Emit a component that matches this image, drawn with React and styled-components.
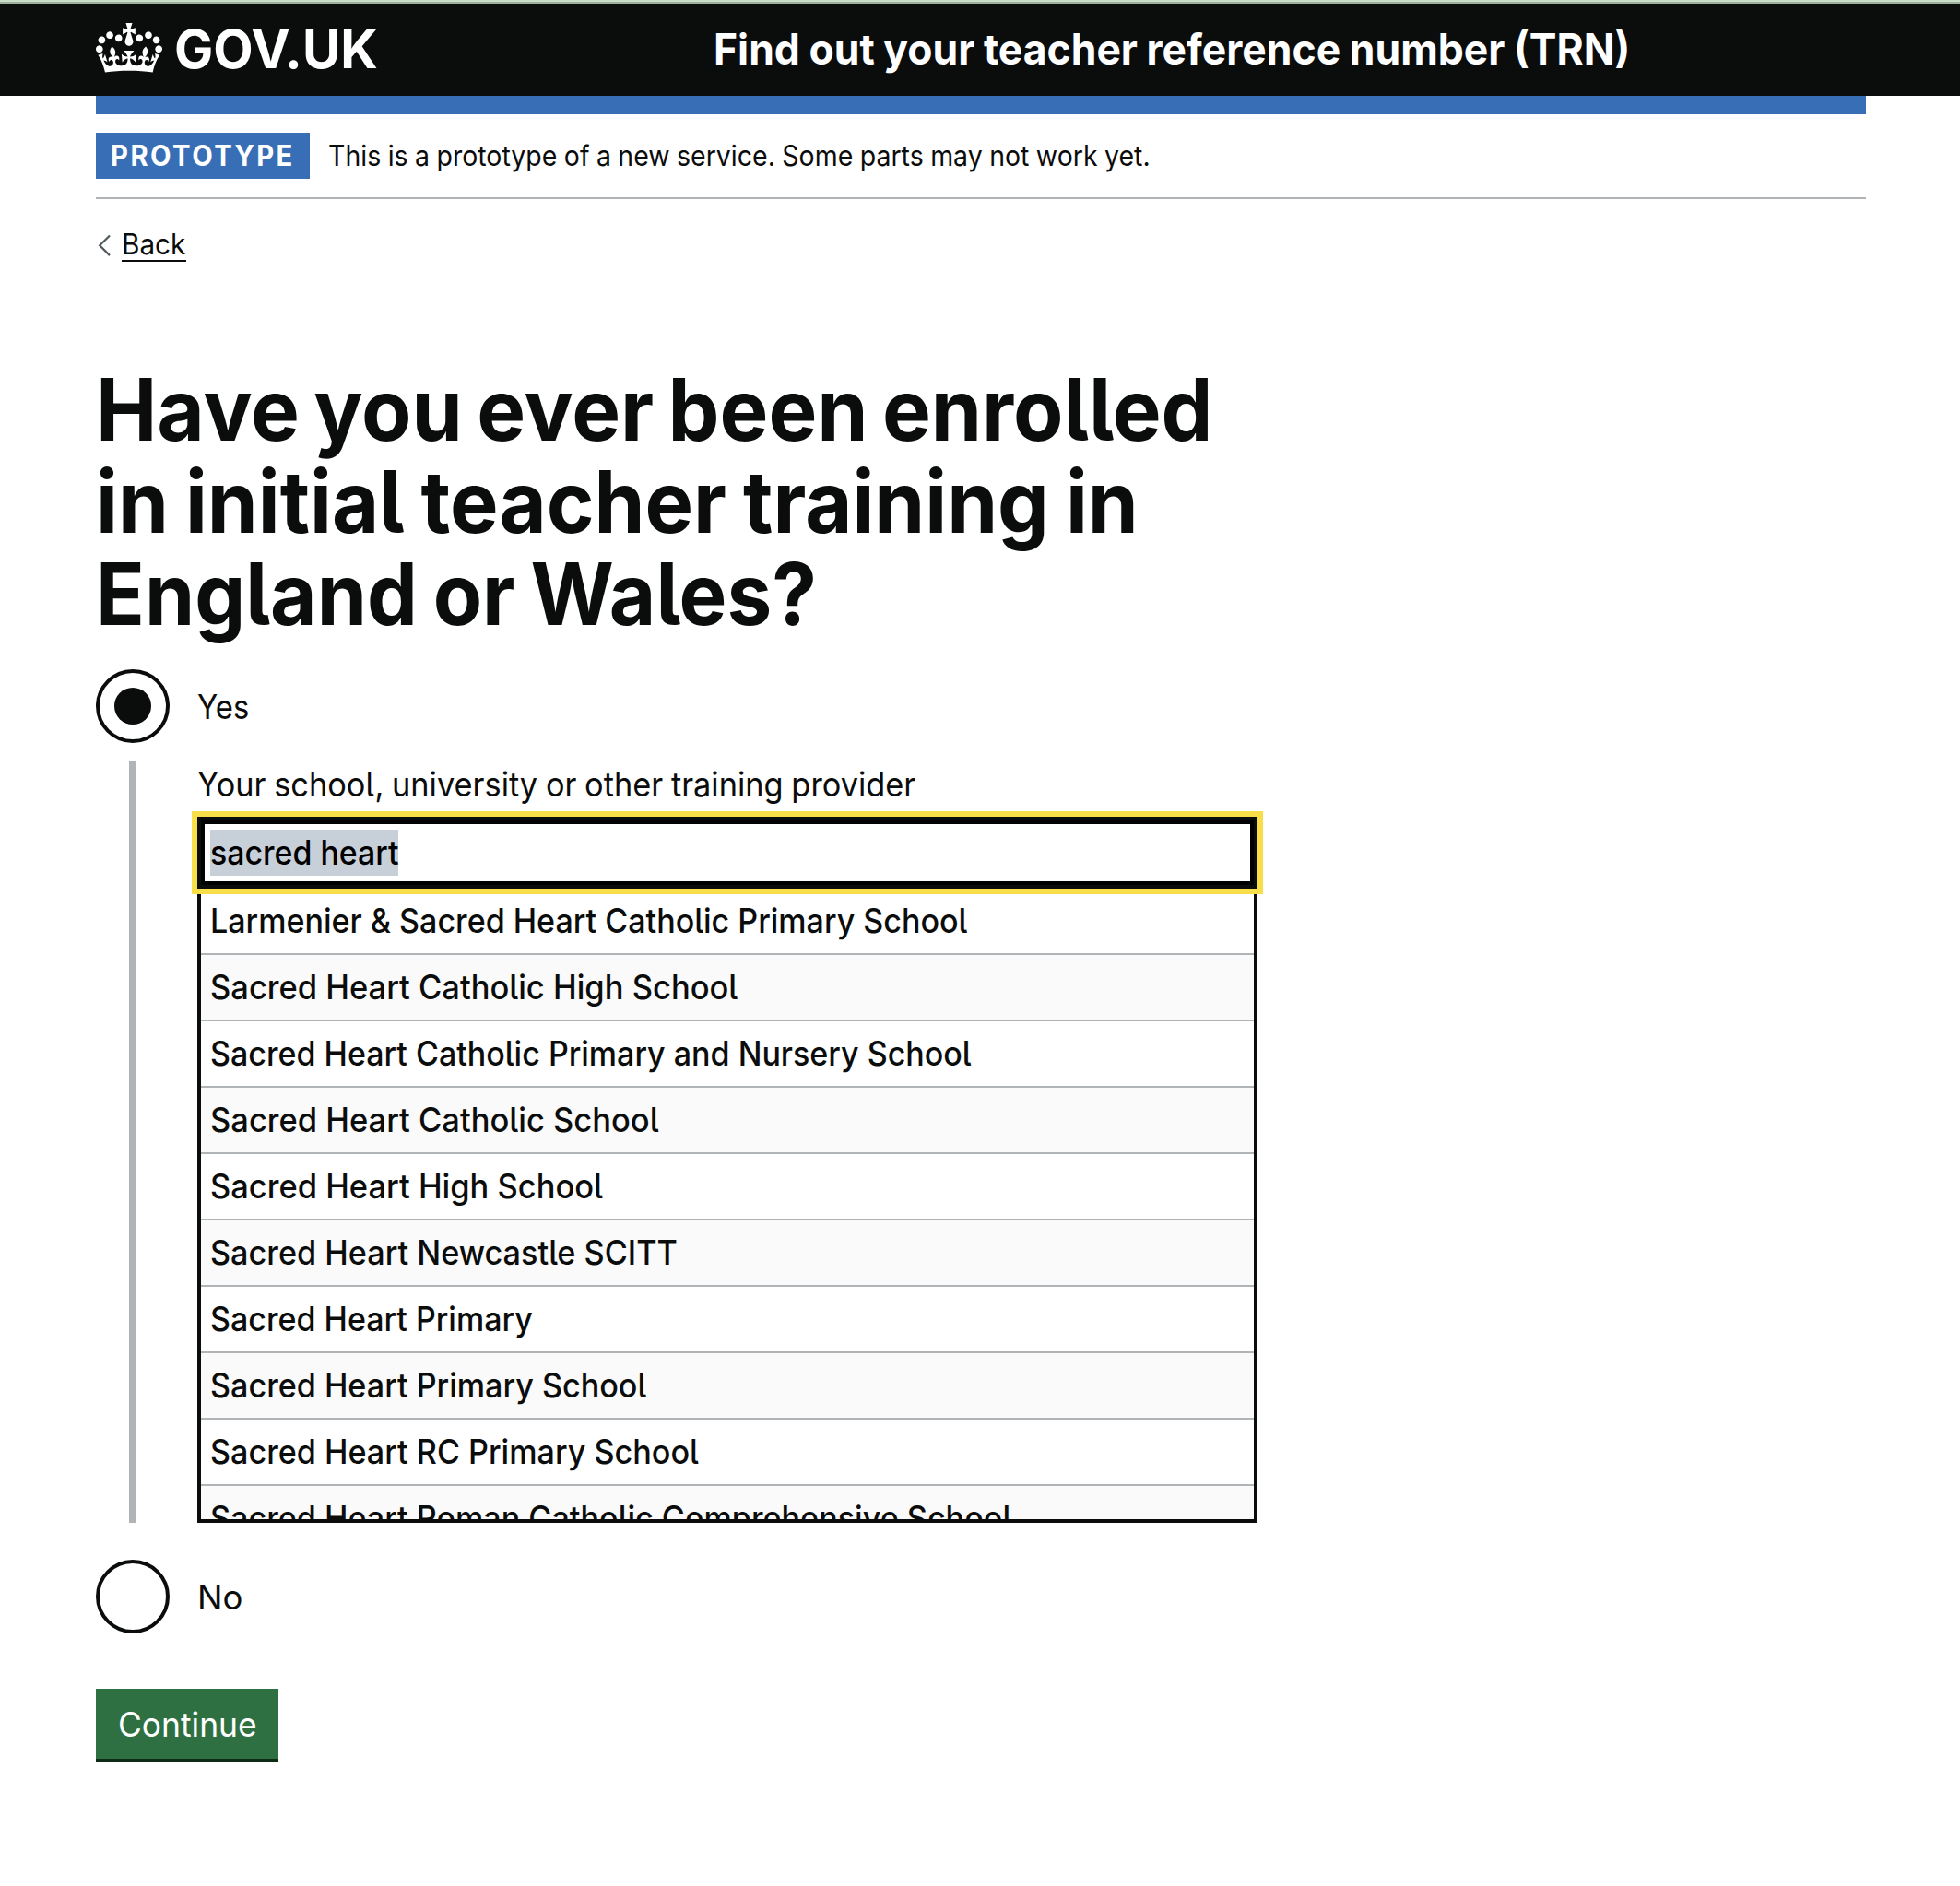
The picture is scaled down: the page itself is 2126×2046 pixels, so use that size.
import React from "react";
import styled, { createGlobalStyle } from "styled-components";

const ink = "#0b0c0c";
const blue = "#386eb5";
const grey = "#b1b4b6";

const GlobalStyle = createGlobalStyle`
  *, *::before, *::after { box-sizing: border-box; }
  body {
    margin: 0;
    background: #fff;
    color: ${ink};
    font-family: Inter, "Liberation Sans", sans-serif;
    font-feature-settings: "cv05";
    -webkit-font-smoothing: antialiased;
  }
`;

/* Slightly condenses a run of text, keeping its left edge in place. */
const Run = styled.span`
  display: ${(p) => (p.$block ? "block" : "inline-block")};
  width: max-content;
  white-space: nowrap;
  word-spacing: ${(p) => p.$gap || 0}px;
  transform: scaleX(${(p) => p.$fit || 0.935});
  transform-origin: left center;
`;

const TopStrip = styled.div`
  height: 4px;
  background: #c8dec8;
  border-bottom: 2px solid #9dae9d;
`;

const Header = styled.header`
  height: 100px;
  background: ${ink};
  color: #fff;
  padding: 0 102px 0 104px;
  display: flex;
`;

const HomeLink = styled.a`
  display: flex;
  width: 670px;
  color: #fff;
  text-decoration: none;
`;

const Crown = styled.svg`
  width: 72px;
  height: 54px;
  margin-top: 21px;
  fill: currentColor;
`;

const LogoText = styled.span`
  margin: 14px 0 0 13px;
  font-size: 58px;
  font-weight: 700;
  line-height: 70px;
`;

const ServiceName = styled.span`
  margin-top: 24px;
  font-size: 46.2px;
  font-weight: 700;
  line-height: 50px;
`;

const Container = styled.div`
  width: 1920px;
  margin-left: 104px;
`;

const BlueBar = styled.div`
  height: 20px;
  background: ${blue};
`;

const PhaseBanner = styled.div`
  display: flex;
  align-items: center;
  height: 92px;
  gap: 20px;
  border-bottom: 2px solid ${grey};
  font-size: 31px;
  line-height: 40px;
`;

const Tag = styled.strong`
  width: 232px;
  height: 50px;
  padding: 5px 16px;
  background: ${blue};
  color: #fff;
  letter-spacing: 2.6px;
`;

const BackLink = styled.a`
  display: flex;
  width: max-content;
  margin-top: 28px;
  height: 42px;
  font-size: 31px;
  line-height: 40px;
  color: ${ink};
  text-decoration: none;
`;

const Chevron = styled.svg`
  width: 28px;
  height: 42px;
  fill: none;
  stroke: #505a5f;
  stroke-width: 2.2;
`;

const BackText = styled.span`
  width: 70px;
  height: 40px;
  padding-top: 1px;
  border-bottom: 2px solid ${ink};
`;

const Main = styled.main`
  width: 1260px;
  padding-top: 108px;
`;

const Heading = styled.h1`
  margin: 0 0 32px;
  font-size: 93px;
  font-weight: 700;
  line-height: 100px;
`;

const Radio = styled.label`
  display: flex;
  gap: 30px;
  height: 80px;
  font-size: 36.7px;
  line-height: 50px;
`;

const Dial = styled.span`
  display: flex;
  align-items: center;
  justify-content: center;
  width: 80px;
  height: 80px;
  border: 4px solid ${ink};
  border-radius: 50%;
`;

const Dot = styled.span`
  width: 40px;
  height: 40px;
  border-radius: 50%;
  background: ${ink};
`;

const RadioText = styled.span`
  padding-top: 16px;
`;

const Conditional = styled.div`
  margin: 20px 0 40px 36px;
  padding-left: 66px;
  border-left: 8px solid ${grey};
  font-size: 36.7px;
  line-height: 50px;
`;

const FieldLabel = styled.div`
  height: 60px;
`;

const Field = styled.div`
  position: relative;
  width: 1150px;
  height: 78px;
  padding: 10px;
  border: 4px solid ${ink};
  box-shadow: inset 0 0 0 4px #000;
  outline: 6px solid #f8de49;
  background: #fff;
  color: #000;
  font-weight: 500;
`;

const Selection = styled.span`
  display: block;
  width: 204px;
  height: 50px;
  background: #c7cfd9;
`;

const Menu = styled.ul`
  list-style: none;
  margin: 0;
  padding: 0;
  width: 1150px;
  height: 688px;
  overflow: hidden;
  border: 4px solid ${ink};
  border-top: 0;
  font-weight: 500;
`;

const Option = styled.li`
  height: 72px;
  padding: 10px;
  border-bottom: 2px solid ${grey};

  &:nth-child(even) { background: #fafafa; }
`;

const Continue = styled.button`
  display: block;
  width: 198px;
  height: 80px;
  margin: 60px 0 0;
  padding: 14px 24px 12px;
  border: 0;
  border-bottom: 4px solid #0e2b18;
  background: #2f7042;
  color: #fff;
  font: 400 36.7px/50px Inter, "Liberation Sans", sans-serif;
  font-feature-settings: inherit;
  text-align: left;
`;

const headingLines = [
  ["Have you ever been enrolled", 0.955, -6],
  ["in initial teacher training in", 0.949, -3],
  ["England or Wales?", 0.9366, -4],
];

const schools = [
  ["Larmenier & Sacred Heart Catholic Primary School", 0.9283],
  ["Sacred Heart Catholic High School", 0.9404],
  ["Sacred Heart Catholic Primary and Nursery School", 0.9275],
  ["Sacred Heart Catholic School", 0.9405],
  ["Sacred Heart High School", 0.9398],
  ["Sacred Heart Newcastle SCITT", 0.933],
  ["Sacred Heart Primary", 0.9275],
  ["Sacred Heart Primary School", 0.9305],
  ["Sacred Heart RC Primary School", 0.931],
  ["Sacred Heart Roman Catholic Comprehensive School", 0.9308],
];

const crownPath =
  "M25 30.2c3.5 1.5 7.7-.2 9.1-3.7 1.5-3.6-.2-7.8-3.9-9.2-3.6-1.4-7.6.3-9.1 3.9-1.4 3.5.3 7.5 3.9 9zM9 39.5c3.6 1.5 7.8-.2 9.2-3.7 1.5-3.6-.2-7.8-3.9-9.1-3.6-1.5-7.6.2-9.1 3.8-1.4 3.5.3 7.5 3.8 9zM4.4 57.2c3.5 1.5 7.7-.2 9.1-3.8 1.5-3.6-.2-7.7-3.9-9.1-3.5-1.5-7.6.3-9.1 3.8-1.4 3.5.3 7.6 3.9 9.1zm38.3-21.4c3.5 1.5 7.7-.2 9.1-3.8 1.5-3.6-.2-7.7-3.9-9.1-3.6-1.5-7.6.3-9.1 3.8-1.3 3.6.4 7.7 3.9 9.1zm64.4-5.6c-3.6 1.5-7.8-.2-9.1-3.7-1.5-3.6.2-7.8 3.8-9.2 3.6-1.4 7.7.3 9.2 3.9 1.3 3.5-.4 7.5-3.9 9zm15.9 9.3c-3.6 1.5-7.7-.2-9.1-3.7-1.5-3.6.2-7.8 3.7-9.1 3.6-1.5 7.7.2 9.2 3.8 1.5 3.5-.3 7.5-3.8 9zm4.7 17.7c-3.6 1.5-7.8-.2-9.2-3.8-1.5-3.6.2-7.7 3.9-9.1 3.6-1.5 7.7.3 9.2 3.8 1.3 3.5-.4 7.6-3.9 9.1zM89.3 35.8c-3.6 1.5-7.8-.2-9.2-3.8-1.4-3.6.2-7.7 3.9-9.1 3.6-1.5 7.7.3 9.2 3.8 1.4 3.6-.3 7.7-3.9 9.1zM69.7 17.7l8.9 4.7V9.3l-8.9 2.8c-.2-.3-.5-.6-.9-.9L72.4 0H59.6l3.5 11.2c-.3.3-.6.5-.9.9l-8.8-2.8v13.1l8.8-4.7c.3.3.6.7.9.9l-5 15.4v.1c-.2.8-.4 1.6-.4 2.4 0 4.1 3.1 7.5 7 8.1h.2c.3 0 .7.1 1 .1.4 0 .7 0 1-.1h.2c4-.6 7.1-4.1 7.1-8.1 0-.8-.1-1.7-.4-2.4V34l-5.1-15.4c.4-.2.7-.6 1-.9zM66 92.8c16.9 0 32.8 1.1 47.1 3.2 4-16.9 8.9-26.7 14-33.5l-9.6-3.4c1 4.9 1.1 7.2 0 10.2-1.5-1.4-3-4.3-4.2-8.7L108.6 76c2.8-2 5-3.2 7.5-3.3-4.4 9.4-10 11.9-13.6 11.2-4.3-.8-6.3-4.6-5.6-7.9 1-4.7 5.7-5.9 8-.5 4.3-8.7-3-11.4-7.6-8.8 7.1-7.2 7.9-13.5 2.1-21.1-8 6.1-8.1 12.3-4.5 20.8-4.7-5.4-12.1-2.5-9.5 6.2 3.4-5.2 7.9-2 7.2 3.1-.6 4.3-6.4 7.8-13.5 7.2-10.3-.9-10.9-8-11.2-13.8 2.5-.5 7.1 1.8 11 7.3L80.2 60c-4.1 4.4-8 5.3-12.3 5.4 1.4-4.4 8-11.6 8-11.6H55.5s6.4 7.2 7.9 11.6c-4.2-.1-8-1-12.3-5.4l1.4 16.4c3.9-5.5 8.5-7.7 10.9-7.3-.3 5.8-.9 12.8-11.1 13.8-7.2.6-12.9-2.9-13.5-7.2-.7-5 3.8-8.3 7.1-3.1 2.7-8.7-4.6-11.6-9.4-6.2 3.7-8.5 3.6-14.7-4.6-20.8-5.8 7.6-5 13.9 2.2 21.1-4.7-2.6-11.9.1-7.7 8.8 2.3-5.5 7.1-4.2 8.1.5.7 3.3-1.3 7.1-5.7 7.9-3.5.7-9-1.8-13.5-11.2 2.5.1 4.7 1.3 7.5 3.3l-4.7-15.4c-1.2 4.4-2.7 7.2-4.3 8.7-1.1-3-.9-5.3 0-10.2l-9.5 3.4c5 6.9 9.9 16.7 14 33.5 14.8-2.1 30.8-3.2 47.7-3.2z";

export default function App() {
  return (
    <>
      <GlobalStyle />
      <TopStrip />
      <Header>
        <HomeLink>
          <Crown viewBox="0 0 132 97" preserveAspectRatio="none">
            <path d={crownPath} />
          </Crown>
          <LogoText><Run $fit={0.9715}>GOV.UK</Run></LogoText>
        </HomeLink>
        <ServiceName>
          <Run $fit={0.963} $gap={-1}>Find out your teacher reference number (TRN)</Run>
        </ServiceName>
      </Header>
      <Container>
        <BlueBar />
        <PhaseBanner>
          <Tag><Run $fit={0.943}>PROTOTYPE</Run></Tag>
          <Run $fit={0.919} $gap={-0.6}>This is a prototype of a new service. Some parts may not work yet.</Run>
        </PhaseBanner>
        <BackLink>
          <Chevron viewBox="0 0 28 42"><path d="M15 11.5L4.2 22.3 15 33.1" /></Chevron>
          <BackText><Run $fit={0.958}>Back</Run></BackText>
        </BackLink>
        <Main>
          <Heading>
            {headingLines.map(([text, fit, gap]) => (
              <Run key={text} $block $fit={fit} $gap={gap}>{text}</Run>
            ))}
          </Heading>
          <Radio>
            <Dial><Dot /></Dial>
            <RadioText><Run $fit={0.895}>Yes</Run></RadioText>
          </Radio>
          <Conditional>
            <FieldLabel>
              <Run $fit={0.936} $gap={-1}>Your school, university or other training provider</Run>
            </FieldLabel>
            <Field>
              <Selection><Run $fit={0.924}>sacred heart</Run></Selection>
            </Field>
            <Menu>
              {schools.map(([name, fit]) => (
                <Option key={name}><Run $fit={fit}>{name}</Run></Option>
              ))}
            </Menu>
          </Conditional>
          <Radio>
            <Dial />
            <RadioText><Run $fit={0.995}>No</Run></RadioText>
          </Radio>
          <Continue><Run $fit={0.965}>Continue</Run></Continue>
        </Main>
      </Container>
    </>
  );
}
